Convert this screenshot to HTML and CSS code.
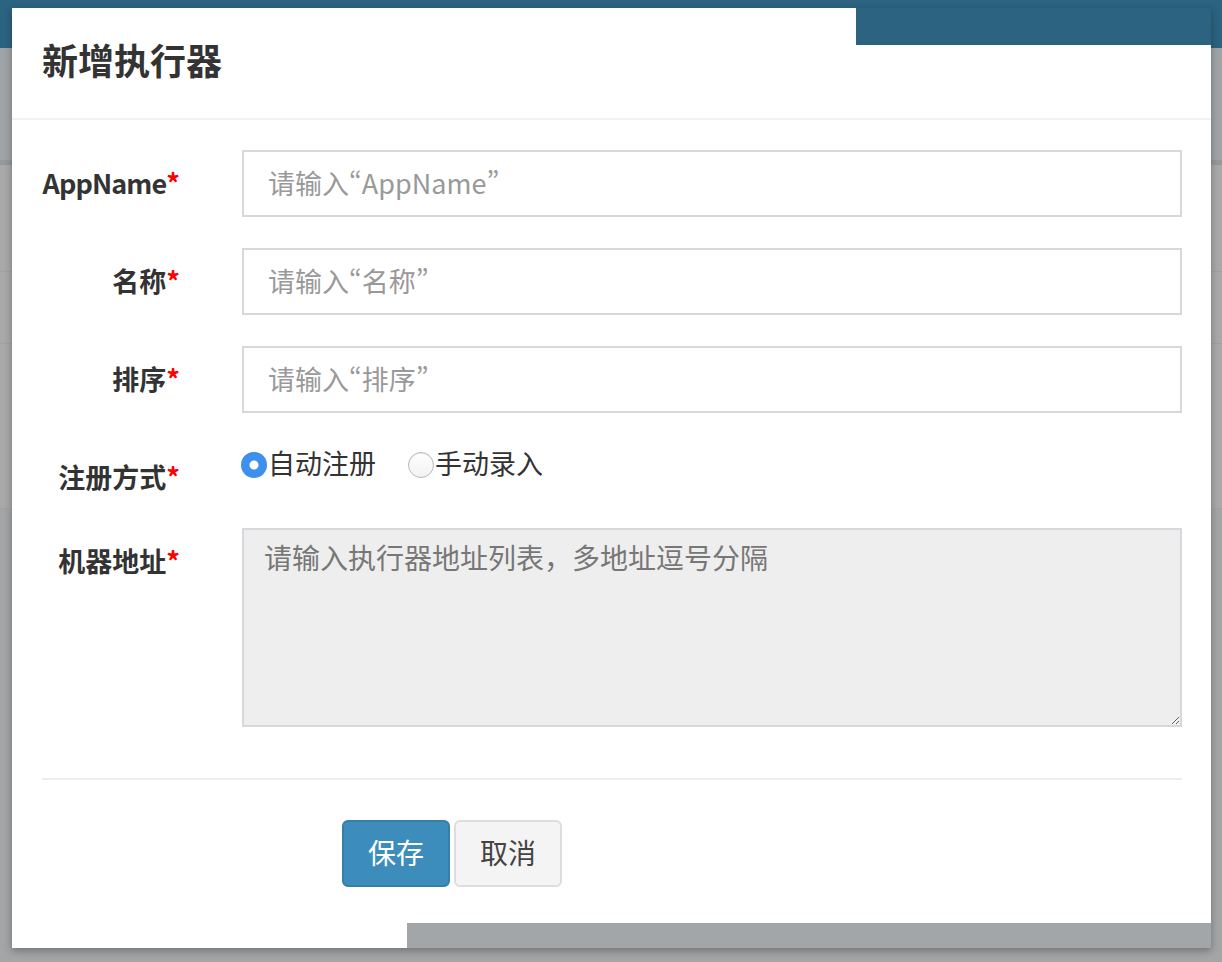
FILE: index.html
```html
<!DOCTYPE html>
<html lang="zh-CN">
<head>
  <meta charset="UTF-8" />
  <title>新增执行器</title>
  <link rel="stylesheet" href="styles.css">
</head>
<body>
  <!-- Página de fondo, tapada por el backdrop -->
  <div class="navbar"></div>
  <div class="page">
    <div class="page-head"></div>
    <div class="page-sep"></div>
    <div class="page-row row-a"></div>
    <div class="page-row row-b"></div>
    <div class="page-row row-c"></div>
  </div>

  <!-- Modal -->
  <div class="modal">
    <div class="modal-header">
      <h4 class="modal-title">新增执行器</h4>
    </div>
    <div class="modal-body">
      <form class="form">
        <div class="form-group">
          <label class="control-label"><span class="latin">AppName</span><span class="req">*</span></label>
          <input type="text" class="form-control" placeholder="请输入“AppName”">
        </div>
        <div class="form-group">
          <label class="control-label">名称<span class="req">*</span></label>
          <input type="text" class="form-control" placeholder="请输入“名称”">
        </div>
        <div class="form-group">
          <label class="control-label">排序<span class="req">*</span></label>
          <input type="text" class="form-control" placeholder="请输入“排序”">
        </div>
        <div class="form-group">
          <label class="control-label">注册方式<span class="req">*</span></label>
          <div class="radios">
            <label class="radio-inline"><input type="radio" name="addressType" checked>自动注册</label>
            <label class="radio-inline"><input type="radio" name="addressType">手动录入</label>
          </div>
        </div>
        <div class="form-group">
          <label class="control-label">机器地址<span class="req">*</span></label>
          <textarea class="form-control textarea" readonly placeholder="请输入执行器地址列表，多地址逗号分隔"></textarea>
        </div>
        <hr>
        <div class="actions">
          <button type="button" class="btn btn-primary">保存</button>
          <button type="button" class="btn btn-default">取消</button>
        </div>
      </form>
    </div>
    <!-- restos del repintado -->
    <div class="glitch-top"></div>
    <div class="glitch-bottom"></div>
  </div>
</body>
</html>
```

FILE: styles.css
```css
body {
  margin: 0;
  background: #a3a5a7;
  font-family: "Noto Sans CJK SC", "Open Sans", sans-serif;
  color: #333;
  height: 962px;
  overflow: hidden;
  position: relative;
}

.navbar {
  height: 48px;
  background: #2c6381;
}

.page-head {
  height: 112px;
  background: #a1a4a7;
}

.page-sep {
  height: 5px;
  background: #96999c;
}

.page-row {
  background: #a9a9a9;
  border-bottom: 1px solid #a2a2a2;
}

.row-a { height: 106px; }
.row-b { height: 71px; }
.row-c { height: 164px; }

.modal {
  position: absolute;
  left: 12px;
  top: 8px;
  width: 1199px;
  background: #fff;
  box-shadow: 0 3px 8px rgba(0, 0, 0, 0.3);
}

.modal-header {
  box-sizing: border-box;
  height: 112px;
  padding: 0 30px 8px;
  display: flex;
  align-items: center;
  border-bottom: 2px solid #f2f2f2;
}

.modal-title {
  margin: 0;
  font-size: 36px;
  font-weight: bold;
  color: #333;
}

.modal-body {
  padding: 30px 29px 61px 30px;
}

.form-group {
  display: grid;
  grid-template-columns: 138px 1fr;
  column-gap: 62px;
  margin-bottom: 31px;
}

.control-label {
  text-align: right;
  font-size: 27px;
  font-weight: bold;
  line-height: 40px;
  padding-top: 13px;
  white-space: nowrap;
}

.control-label .latin {
  letter-spacing: -0.9px;
}

.req {
  color: #f00;
}

.form-control {
  box-sizing: border-box;
  height: 67px;
  width: 100%;
  border: 2px solid #d6d8dc;
  padding: 0 24px 3px;
  font-family: inherit;
  font-size: 27px;
  color: #555;
  outline: none;
  font-feature-settings: "pwid";
}

.form-control::placeholder {
  color: #999;
}

.textarea {
  height: 199px;
  padding: 7px 20px;
  line-height: 40px;
  font-size: 28px;
  background: #eee;
  resize: vertical;
  font-feature-settings: normal;
}

.textarea::placeholder {
  color: #777;
}

.radios {
  display: flex;
  gap: 33px;
  height: 40px;
  align-items: center;
}

.radio-inline {
  display: flex;
  align-items: center;
  font-size: 27px;
  line-height: 40px;
  padding-bottom: 3px;
}

.radio-inline input {
  appearance: none;
  box-sizing: border-box;
  width: 26px;
  height: 26px;
  margin: 4px 1px 0 -1px;
  border-radius: 50%;
  border: 1px solid #b9b9b9;
  background: linear-gradient(#fff, #f2f2f2);
  box-shadow: inset 0 1px 1px rgba(0, 0, 0, 0.08);
}

.radio-inline input:checked {
  border: none;
  background: radial-gradient(circle, #fff 0 4px, #3d90ee 5px);
}

hr {
  border: none;
  border-top: 2px solid #eee;
  margin: 51px 0 40px;
}

.actions {
  display: flex;
  gap: 4px;
  padding-left: 300px;
}

.btn {
  box-sizing: border-box;
  width: 108px;
  height: 67px;
  padding-bottom: 5px;
  border-radius: 6px;
  font-family: inherit;
  font-size: 28px;
  cursor: pointer;
}

.btn-primary {
  background: #3c8dbc;
  border: 2px solid #367fa9;
  color: #fff;
}

.btn-default {
  background: #f4f4f4;
  border: 2px solid #ddd;
  color: #444;
}

.glitch-top {
  position: absolute;
  top: 0;
  right: 0;
  width: 355px;
  height: 37px;
  background: #2c6381;
}

.glitch-bottom {
  position: absolute;
  bottom: 0;
  right: 0;
  width: 804px;
  height: 25px;
  background: #a3a6a9;
}
```
